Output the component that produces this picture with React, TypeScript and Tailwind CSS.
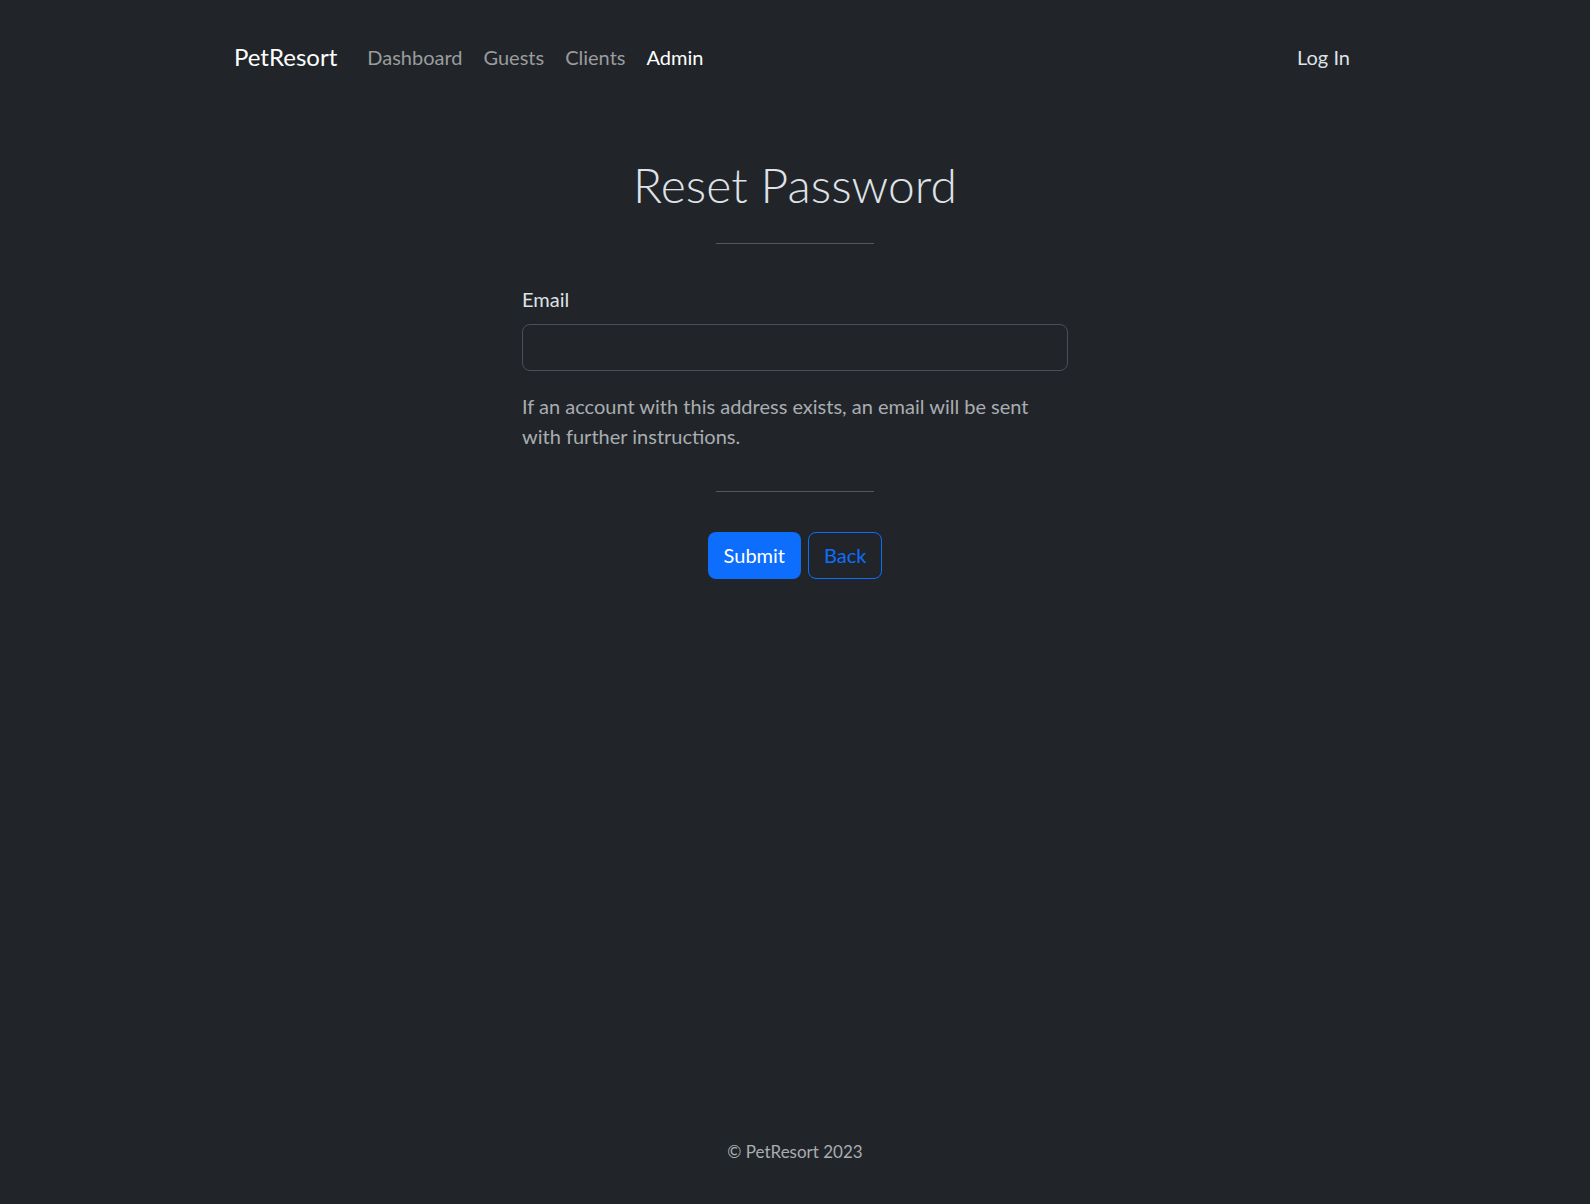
import { useState } from "react";

const navLinks = [
  { label: "Dashboard", active: false },
  { label: "Guests", active: false },
  { label: "Clients", active: false },
  { label: "Admin", active: true },
];

export default function App() {
  const [email, setEmail] = useState("");

  return (
    <div className="min-h-screen flex flex-col bg-[#212529] text-[#dee2e6] font-['Lato','Liberation_Sans',sans-serif]">
      {/* Navbar */}
      <header className="h-[116px] pb-[2px] flex items-center">
        <nav className="w-full max-w-[1140px] mx-auto pl-[9px] pr-[15px] flex items-center">
          <a href="#" className="text-[24px] leading-9 text-white mr-[30px]">
            PetResort
          </a>
          <ul className="flex items-center gap-[21px]">
            {navLinks.map((link) => (
              <li key={link.label}>
                <a
                  href="#"
                  className={
                    link.active
                      ? "text-[20px] leading-9 text-white"
                      : "text-[20px] leading-9 text-[#9a9c9e] hover:text-white"
                  }
                >
                  {link.label}
                </a>
              </li>
            ))}
          </ul>
          <a href="#" className="ml-auto text-[20px] leading-9 text-[#dee2e6]">
            Log In
          </a>
        </nav>
      </header>

      {/* Reset form */}
      <main className="flex-1 flex flex-col items-center">
        <h1 className="mt-[40px] text-[48px] leading-[1.2] font-light text-[#dee2e6]">
          Reset Password
        </h1>
        <hr className="mt-[29px] w-[158px] border-t border-[#55595d]" />

        <form
          className="w-[546px] mt-[40px]"
          onSubmit={(e) => e.preventDefault()}
        >
          <label htmlFor="email" className="block text-[20px] leading-[30px] text-[#dee2e6]">
            Email
          </label>
          <input
            id="email"
            type="email"
            value={email}
            onChange={(e) => setEmail(e.target.value)}
            className="mt-[10px] block w-full h-[47px] rounded-lg border border-[#495057] bg-[#212529] px-4 text-[20px] text-[#dee2e6] outline-none focus:border-[#86b7fe]"
          />
          <p className="mt-[20px] text-[20px] leading-[30px] text-[#a9adb1]">
            If an account with this address exists, an email will be sent with
            further instructions.
          </p>
        </form>

        <hr className="mt-[40px] w-[158px] border-t border-[#55595d]" />

        <div className="mt-[40px] flex items-center gap-[7px]">
          <button
            type="submit"
            className="h-[47px] px-4 rounded-lg bg-[#0d6efd] text-white text-[20px] hover:bg-[#0b5ed7]"
          >
            Submit
          </button>
          <button
            type="button"
            className="h-[47px] px-[15px] rounded-lg border border-[#0d6efd] text-[#0d6efd] text-[20px] hover:bg-[#0d6efd] hover:text-white"
          >
            Back
          </button>
        </div>
      </main>

      {/* Footer */}
      <footer className="pb-[39px] text-center text-[17px] leading-[27px] text-[#a9adb1]">
        © PetResort 2023
      </footer>
    </div>
  );
}
